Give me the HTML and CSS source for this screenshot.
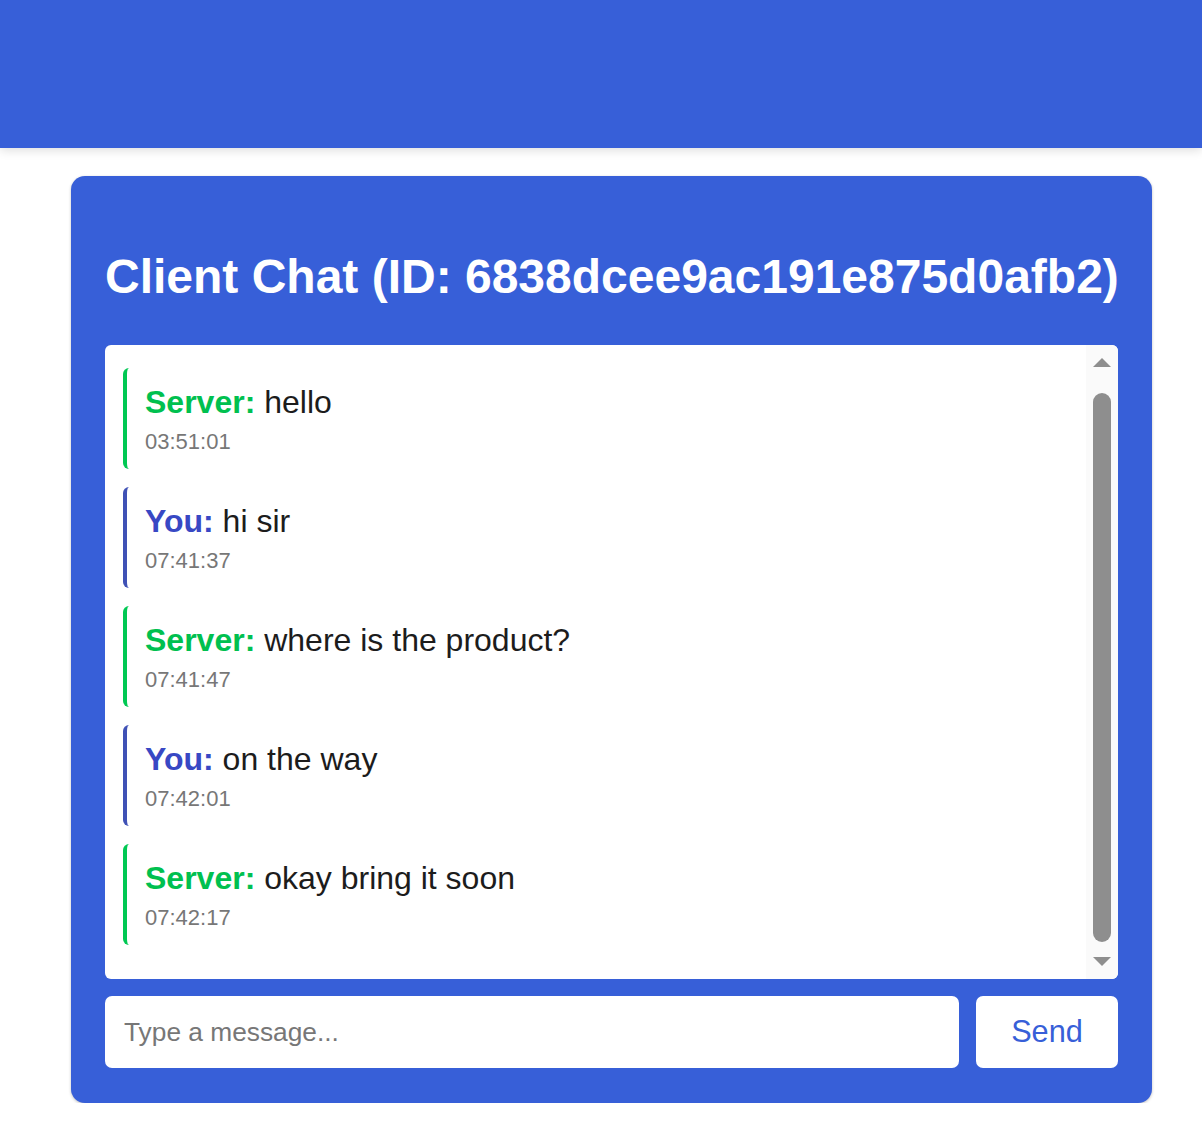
FILE: index.html
```html
<!DOCTYPE html>
<html lang="en">
<head>
<meta charset="utf-8">
<title>Client Chat</title>
<link rel="stylesheet" href="styles.css">
</head>
<body>
<header class="topbar"></header>
<main class="card">
  <h2 class="title">Client Chat (ID: 6838dcee9ac191e875d0afb2)</h2>
  <div class="chat-box">
    <div class="messages">
      <div class="msg server">
        <div class="line"><span class="who">Server:</span> hello</div>
        <div class="time">03:51:01</div>
      </div>
      <div class="msg you">
        <div class="line"><span class="who">You:</span> hi sir</div>
        <div class="time">07:41:37</div>
      </div>
      <div class="msg server">
        <div class="line"><span class="who">Server:</span> where is the product?</div>
        <div class="time">07:41:47</div>
      </div>
      <div class="msg you">
        <div class="line"><span class="who">You:</span> on the way</div>
        <div class="time">07:42:01</div>
      </div>
      <div class="msg server">
        <div class="line"><span class="who">Server:</span> okay bring it soon</div>
        <div class="time">07:42:17</div>
      </div>
    </div>
    <div class="scrollbar" aria-hidden="true">
      <div class="sb-btn sb-up"><span class="arrow-up"></span></div>
      <div class="sb-track"><div class="sb-thumb"></div></div>
      <div class="sb-btn sb-down"><span class="arrow-down"></span></div>
    </div>
  </div>
  <form class="composer" onsubmit="return false">
    <input class="input" type="text" placeholder="Type a message...">
    <button class="send" type="submit">Send</button>
  </form>
</main>
</body>
</html>
```

FILE: styles.css
```css
html, body {
  margin: 0;
  padding: 0;
  background: #ffffff;
  font-family: "Liberation Sans", Arial, sans-serif;
}

.topbar {
  height: 148px;
  background: #375fd8;
  box-shadow: 0 2px 10px rgba(0, 0, 0, 0.14);
}

.card {
  margin: 28px 50px 0 71px;
  padding: 34px 34px 35px;
  background: #375fd8;
  border-radius: 14px;
  box-shadow: 0 1px 3px rgba(0, 0, 0, 0.25);
}

.title {
  margin: 39px 0 41px;
  color: #ffffff;
  font-size: 48px;
  font-weight: bold;
  line-height: normal;
  white-space: nowrap;
}

.chat-box {
  height: 634px;
  box-sizing: border-box;
  background: #ffffff;
  border-radius: 6px;
  overflow: hidden;
  display: flex;
}

.messages {
  flex: 1;
  min-width: 0;
  overflow: hidden;
  display: flex;
  flex-direction: column;
  gap: 18px;
  padding: 23px 0 0 18px;
}

.scrollbar {
  width: 32px;
  flex: none;
  background: #fafafa;
  display: flex;
  flex-direction: column;
}
.sb-btn {
  height: 32px;
  flex: none;
  display: flex;
  justify-content: center;
  box-sizing: border-box;
}
.sb-up {
  padding-top: 13px;
}
.sb-down {
  padding-top: 10px;
}
.arrow-up {
  width: 0;
  height: 0;
  border-left: 9px solid transparent;
  border-right: 9px solid transparent;
  border-bottom: 9px solid #8e8e8e;
}
.arrow-down {
  width: 0;
  height: 0;
  border-left: 9px solid transparent;
  border-right: 9px solid transparent;
  border-top: 9px solid #8e8e8e;
}
.sb-track {
  flex: 1;
  display: flex;
  flex-direction: column;
  padding: 16px 7px 5px;
}
.sb-thumb {
  flex: 1;
  background: #8e8e8e;
  border-radius: 9px;
}

.msg {
  padding: 16px 18px 14px;
  border-left: 4px solid #00c853;
  border-radius: 6px;
}
.msg.you {
  border-left-color: #3f51b5;
}

.line {
  font-size: 32px;
  line-height: normal;
  color: #1c1c1c;
}
.who {
  font-weight: bold;
}
.server .who {
  color: #00c04f;
}
.you .who {
  color: #3848c4;
}

.time {
  margin-top: 8px;
  font-size: 22px;
  line-height: normal;
  color: #777777;
}

.composer {
  display: flex;
  gap: 17px;
  margin-top: 17px;
}

.input {
  flex: 1;
  min-width: 0;
  height: 72px;
  box-sizing: border-box;
  padding: 0 19px;
  border: none;
  border-radius: 7px;
  background: #ffffff;
  font-family: "Liberation Sans", Arial, sans-serif;
  font-size: 26.3px;
  color: #222222;
  outline: none;
}
.input::placeholder {
  color: #777777;
}

.send {
  width: 142px;
  height: 72px;
  border: none;
  border-radius: 7px;
  background: #ffffff;
  color: #375fd8;
  font-family: "Liberation Sans", Arial, sans-serif;
  font-size: 30.7px;
  cursor: pointer;
}
```
